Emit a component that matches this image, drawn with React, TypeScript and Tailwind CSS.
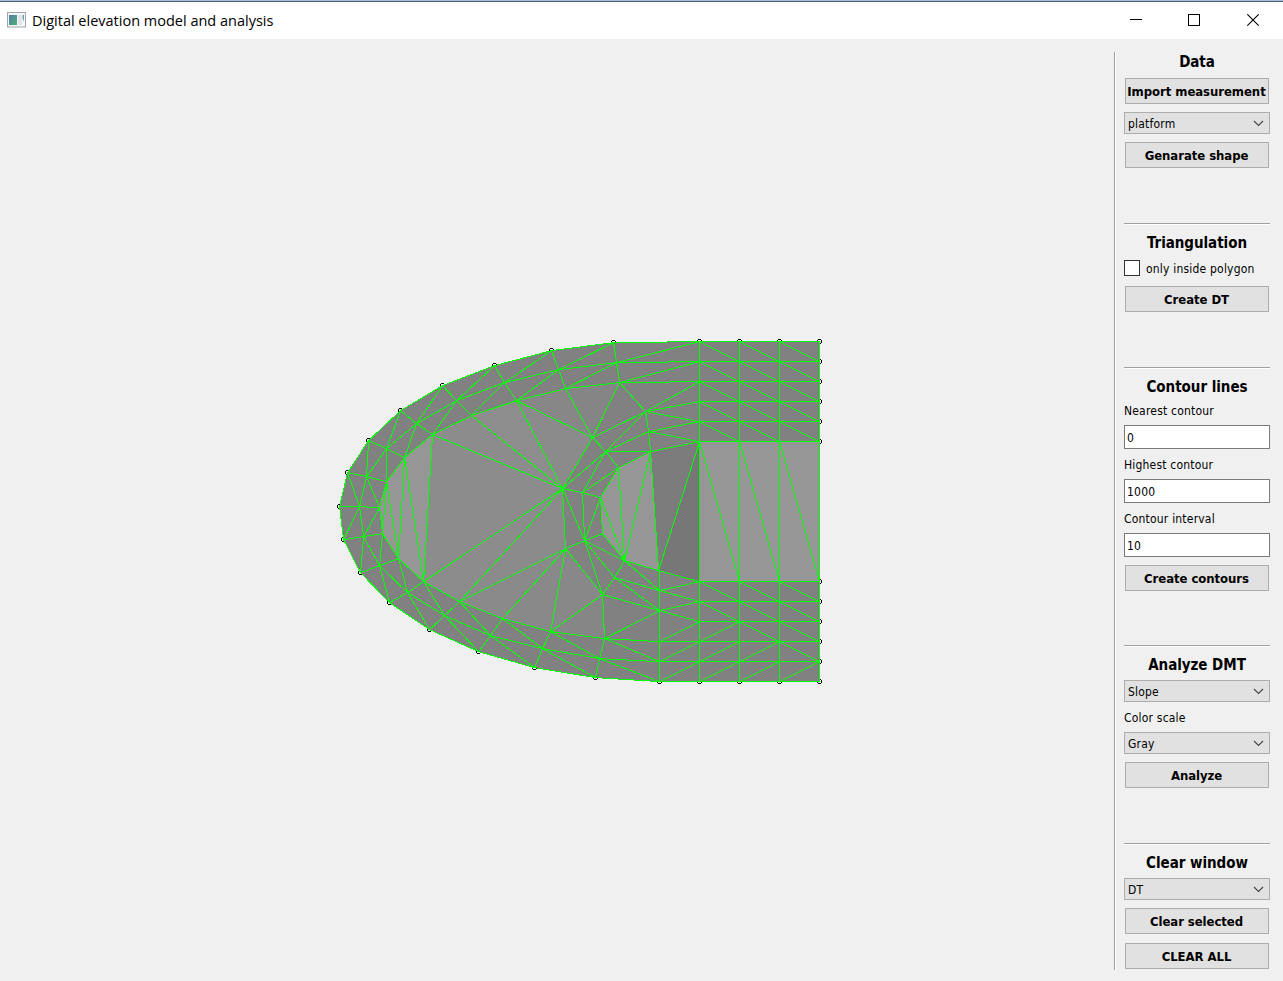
import React from "react";

type Pt = [number, number];

const points: Record<string, Pt> = {
  U0: [339.5, 506.5], U1: [347.5, 472.5], U2: [368.5, 440.5], U3: [400.5, 410.5], U4: [442.5, 385.5],
  U5: [494.5, 365.5], U6: [551.5, 350.5], U7: [613.5, 342.5], U8: [699.5, 341.5],
  M0: [359.5, 506.5], M1: [366.5, 476.5], M2: [386.5, 448.5], M3: [416.5, 423.5], M4: [456.5, 400.5],
  M5: [504.5, 382.5], M6: [558.5, 369.5], M7: [616.5, 362.5], M8: [699.5, 361.5],
  I0: [379.5, 507.5], I1: [386.5, 481.5], I2: [404.5, 457.5], I3: [432.5, 434.5], I4: [471.5, 415.5],
  I5: [516.5, 400.5], I6: [565.5, 388.5], I7: [619.5, 382.5], I8: [699.5, 381.5],
  L1: [343.5, 539.5], L2: [360.5, 572.5], L3: [389.5, 602.5], L4: [429.5, 629.5], L5: [478.5, 651.5],
  L6: [534.5, 667.5], L7: [595.5, 677.5], L8: [659.5, 681.5],
  N1: [363.5, 536.5], N2: [379.5, 565.5], N3: [407.5, 592.5], N4: [444.5, 615.5], N5: [490.5, 635.5],
  N6: [542.5, 648.5], N7: [599.5, 658.5], N8: [659.5, 661.5],
  J1: [382.5, 533.5], J2: [398.5, 558.5], J3: [423.5, 581.5], J4: [459.5, 601.5], J5: [502.5, 618.5],
  J6: [550.5, 631.5], J7: [604.5, 638.5], J8: [659.5, 641.5],
  A0: [645.5, 411.5], A1: [592.5, 437.5], A2: [562.5, 488.5], A3: [565.5, 548.5], A4: [602.5, 594.5], A5: [659.5, 610.5],
  B0: [648.5, 431.5], B1: [605.5, 451.5], B2: [582.5, 492.5], B3: [584.5, 540.5], B4: [614.5, 577.5], B5: [659.5, 590.5],
  C0: [650.5, 451.5], C1: [618.5, 467.5], C2: [600.5, 497.5], C3: [602.5, 533.5], C4: [624.5, 560.5], C5: [658.5, 570.5],
  R4: [699.5, 401.5], R5: [699.5, 421.5], R6: [699.5, 441.5],
  S0: [699.5, 581.5], S1: [699.5, 601.5], S2: [699.5, 621.5], S3: [699.5, 641.5], S4: [699.5, 661.5],
};

const chains = [
  "U0 U1 U2 U3 U4 U5 U6 U7 U8", "M0 M1 M2 M3 M4 M5 M6 M7 M8", "I0 I1 I2 I3 I4 I5 I6 I7 I8",
  "U0 L1 L2 L3 L4 L5 L6 L7 L8", "M0 N1 N2 N3 N4 N5 N6 N7 N8", "I0 J1 J2 J3 J4 J5 J6 J7 J8",
  "U0 M0 I0", "U1 M1 I1", "U2 M2 I2", "U3 M3 I3", "U4 M4 I4", "U5 M5 I5", "U6 M6 I6", "U7 M7 I7",
  "L1 N1 J1", "L2 N2 J2", "L3 N3 J3", "L4 N4 J4", "L5 N5 J5", "L6 N6 J6", "L7 N7 J7",
  "U1 M0", "U2 M1 I0", "U3 M2 I1", "U4 M3 I2", "U5 M4 I3", "U6 M5 I4", "U7 M6 I5", "U8 M7 I6", "M8 I7",
  "L1 M0", "L2 N1 I0", "L3 N2 J1", "L4 N3 J2", "L5 N4 J3", "L6 N5 J4", "L7 N6 J5", "L8 N7 J6", "N8 J7",
  "I1 J1", "I1 J2 I2 J3 I3", "I3 A2 I4", "I5 A2", "J3 A2 J4 A3 J5", "A3 J6 A4 J7 A5",
  "A0 A1 A2 A3 A4 A5", "B0 B1 B2 B3 B4 B5", "C0 C1 C2 C3 C4 C5",
  "A0 B0 C0", "A1 B1 C1", "A2 B2 C2", "A3 B3 C3", "A4 B4 C4", "A5 B5",
  "I5 A1 I6", "A1 I7 A0", "A0 B1 C0", "A2 B1", "B2 C1 C4 C0", "C2 C4 B3", "A2 B3 C2", "A4 B3",
  "C4 B5", "B4 A5", "C0 C5 R6 C0", "B0 R6", "B0 R5 A0 R4", "A0 I8",
  "C5 S0 B5 S1 A5 S2 J8 S3 N8 S4 L8",
];

const coords = (names: string) => names.split(" ").map((n) => points[n].join(",")).join(" ");

const fills: [string, string][] = [
  ["I0 I1 I2 I3 J3 J2 J1", "#969696"],
  ["I3 I4 A2 J3", "#8c8c8c"],
  ["I4 I5 A2", "#8d8d8d"],
  ["J3 A2 J4", "#8c8c8c"],
  ["J4 A2 A3 J5", "#8b8b8b"],
  ["J5 A3 J6", "#898989"],
  ["J6 A3 A4", "#888888"],
  ["J4 A3 J5", "#8a8a8a"],
  ["J6 A4 J7", "#868686"],
  ["I5 A1 A2", "#8b8b8b"],
  ["I5 I6 A1", "#878787"],
  ["I6 I7 A1", "#858585"],
  ["C0 C1 C2 C3 C4 C5", "#969696"],
  ["C0 R6 C5", "#7c7c7c"],
  ["R6 S0 C5", "#777777"],
];

function gridPath() {
  const xs = [699.5, 739.5, 779.5, 819.5];
  const top = [341.5, 361.5, 381.5, 401.5, 421.5, 441.5];
  const bottom = [581.5, 601.5, 621.5, 641.5, 661.5, 681.5];
  const rising = [[], [], [0], [0, 1], [0, 1, 2]];
  let d = "M659.5 570.5V681.5";
  xs.forEach((x) => (d += `M${x} 341.5V681.5`));
  [...top, ...bottom].forEach((y) => (d += `M${y >= 641 ? 659.5 : 699.5} ${y}H819.5`));
  for (let c = 0; c < 3; c++) {
    for (let r = 0; r < 5; r++) {
      d += `M${xs[c]} ${top[r]}L${xs[c + 1]} ${top[r + 1]}`;
      const up = (rising[r] as number[]).includes(c);
      d += `M${xs[c]} ${bottom[up ? r + 1 : r]}L${xs[c + 1]} ${bottom[up ? r : r + 1]}`;
    }
    d += `M${xs[c]} 441.5L${xs[c + 1]} 581.5`;
  }
  return d;
}

const markers: Pt[] = [
  ..."U0 U1 U2 U3 U4 U5 U6 U7 U8 L1 L2 L3 L4 L5 L6 L7 L8".split(" ").map((n) => points[n]),
  [739.5, 341.5], [779.5, 341.5], [699.5, 681.5], [739.5, 681.5], [779.5, 681.5],
  ...[341.5, 361.5, 381.5, 401.5, 421.5, 441.5, 581.5, 601.5, 621.5, 641.5, 661.5, 681.5].map((y): Pt => [819.5, y]),
];

function TerrainMesh() {
  return (
    <svg className="block h-[942px] w-[1114px] shrink-0" viewBox="0 39 1114 942" shapeRendering="crispEdges">
      {markers.map(([x, y], i) => (
        <path key={i} d={`M${x - 1.5} ${y - 2}h3M${x - 1.5} ${y + 2}h3M${x - 2} ${y - 1.5}v3M${x + 2} ${y - 1.5}v3`} stroke="#000" fill="none" />
      ))}
      <polygon
        points={`${coords("U0 U1 U2 U3 U4 U5 U6 U7 U8")} 819.5,341.5 819.5,681.5 ${coords("L8 L7 L6 L5 L4 L3 L2 L1")}`}
        fill="#818181"
      />
      {fills.map(([names, color]) => (
        <polygon key={names} points={coords(names)} fill={color} />
      ))}
      <rect x="699.5" y="441.5" width="120" height="140" fill="#969696" />
      <g fill="none" stroke="#00ff00" strokeWidth="1" transform="translate(0.07 0.13)">
        {chains.map((c) => (
          <polyline key={c} points={coords(c)} />
        ))}
        <path d={gridPath()} />
      </g>
    </svg>
  );
}

function Heading({ children, className = "" }: { children: React.ReactNode; className?: string }) {
  return (
    <h2 className={`flex h-5 items-center justify-center whitespace-nowrap pb-px font-['DejaVu_Sans_Condensed','DejaVu_Sans',sans-serif] text-[15px] font-bold leading-5 tracking-[-0.04px] [font-stretch:condensed] ${className}`}>
      {children}
    </h2>
  );
}

function Button({ children, className = "" }: { children: React.ReactNode; className?: string }) {
  return (
    <button className={`mx-px flex h-[26px] items-center justify-center whitespace-nowrap border border-[#adadad] bg-[#e1e1e1] pr-px font-['DejaVu_Sans_Condensed','DejaVu_Sans',sans-serif] text-[13px] font-bold leading-none tracking-[-0.06px] [font-stretch:condensed] ${className}`}>
      {children}
    </button>
  );
}

function Combo({ children, className = "" }: { children: React.ReactNode; className?: string }) {
  return (
    <div className={`flex h-[22px] items-center justify-between border border-[#adadad] bg-[#e1e1e1] pl-[3px] pr-[5px] ${className}`}>
      <span className="pt-px">{children}</span>
      <svg className="h-[7px] w-[11px]" viewBox="0 0 11 7" fill="none" stroke="#444" strokeWidth="1.1">
        <path d="M1 1l4.5 4.5L10 1" />
      </svg>
    </div>
  );
}

function Label({ children, className = "" }: { children: React.ReactNode; className?: string }) {
  return <div className={`flex h-4 items-center whitespace-nowrap ${className}`}>{children}</div>;
}

function Field({ value, className = "" }: { value: string; className?: string }) {
  return <input defaultValue={value} className={`block h-6 w-full border border-[#7a7a7a] bg-white px-[2px] pt-px tracking-[0.2px] outline-none ${className}`} />;
}

function Rule({ className = "" }: { className?: string }) {
  return <div className={`h-[2px] shrink-0 border-b border-t border-b-white border-t-[#a0a0a0] ${className}`} />;
}

export default function App() {
  return (
    <div className="flex h-[981px] w-[1283px] flex-col overflow-hidden bg-[#f0f0f0] text-black">
      <div className="h-px shrink-0 bg-[#a9bcd6]" />
      <header className="flex h-[38px] shrink-0 items-center border-t border-t-[#4f6078] bg-white pl-[7px]">
        <svg className="-mt-px h-[16px] w-[19px]" viewBox="0 0 19 16">
          <defs>
            <linearGradient id="pane" x1="0" y1="0" x2="1" y2="1">
              <stop offset="0" stopColor="#4c80a8" />
              <stop offset="1" stopColor="#55ac70" />
            </linearGradient>
          </defs>
          <rect x=".5" y=".5" width="18" height="14.5" fill="#f5f6f8" stroke="#a3a6ae" />
          <rect x="2" y="3" width="8" height="10" fill="url(#pane)" />
          <rect x="11" y="3" width="4" height="10" fill="#e2e5e9" />
          <path d="M15.5 3h1.5v7l-1.5-4z" fill="#67a79b" />
        </svg>
        <h1 className="ml-[6px] flex-1 whitespace-nowrap font-['Open_Sans','Noto_Sans',sans-serif] text-[14.5px]">Digital elevation model and analysis</h1>
        <div className="flex w-[170px] items-center">
          <svg className="ml-[17px] h-[13px] w-[13px]" viewBox="0 0 13 13" shapeRendering="crispEdges">
            <path d="M0 5.5h12" stroke="#000" />
          </svg>
          <svg className="ml-[45px] h-[13px] w-[13px]" viewBox="0 0 13 13" shapeRendering="crispEdges">
            <path d="M.5 .5h11v11h-11z" fill="none" stroke="#000" />
          </svg>
          <svg className="ml-[46px] h-[13px] w-[13px]" viewBox="0 0 13 13">
            <path d="M.3 .3l11.4 11.4M11.7 .3L.3 11.7" stroke="#000" strokeWidth="1.1" />
          </svg>
        </div>
      </header>
      <main className="flex min-h-0 flex-1">
        <TerrainMesh />
        <div className="mt-[13px] h-[918px] w-[2px] border-l border-r border-l-[#a0a0a0] border-r-white" />
        <aside className="ml-2 flex w-[146px] flex-col pt-[13px] font-['DejaVu_Sans_Condensed','DejaVu_Sans',sans-serif] text-[12px] leading-none tracking-[0.2px] [font-stretch:condensed]">
          <Heading>Data</Heading>
          <Button className="mt-[6px]">Import measurement</Button>
          <Combo className="mt-2">platform</Combo>
          <Button className="mt-2">Genarate shape</Button>
          <Rule className="mt-[55px]" />
          <Heading className="mt-2">Triangulation</Heading>
          <label className="mt-[7px] flex h-4 items-center gap-[6px] whitespace-nowrap">
            <span className="h-4 w-4 border border-[#333] bg-white" />
            <span className="pt-px">only inside polygon</span>
          </label>
          <Button className="mt-[10px]">Create DT</Button>
          <Rule className="mt-[55px]" />
          <Heading className="mt-2">Contour lines</Heading>
          <Label className="mt-[6px]">Nearest contour</Label>
          <Field className="mt-[6px]" value="0" />
          <Label className="mt-2">Highest contour</Label>
          <Field className="mt-[6px]" value="1000" />
          <Label className="mt-2">Contour interval</Label>
          <Field className="mt-[6px]" value="10" />
          <Button className="mt-2">Create contours</Button>
          <Rule className="mt-[54px]" />
          <Heading className="mt-2">Analyze DMT</Heading>
          <Combo className="mt-[5px]">Slope</Combo>
          <Label className="mt-2">Color scale</Label>
          <Combo className="mt-[6px]">Gray</Combo>
          <Button className="mt-2">Analyze</Button>
          <Rule className="mt-[55px]" />
          <Heading className="mt-2">Clear window</Heading>
          <Combo className="mt-[5px]">DT</Combo>
          <Button className="mt-2">Clear selected</Button>
          <Button className="mt-[9px]">CLEAR ALL</Button>
        </aside>
      </main>
    </div>
  );
}
